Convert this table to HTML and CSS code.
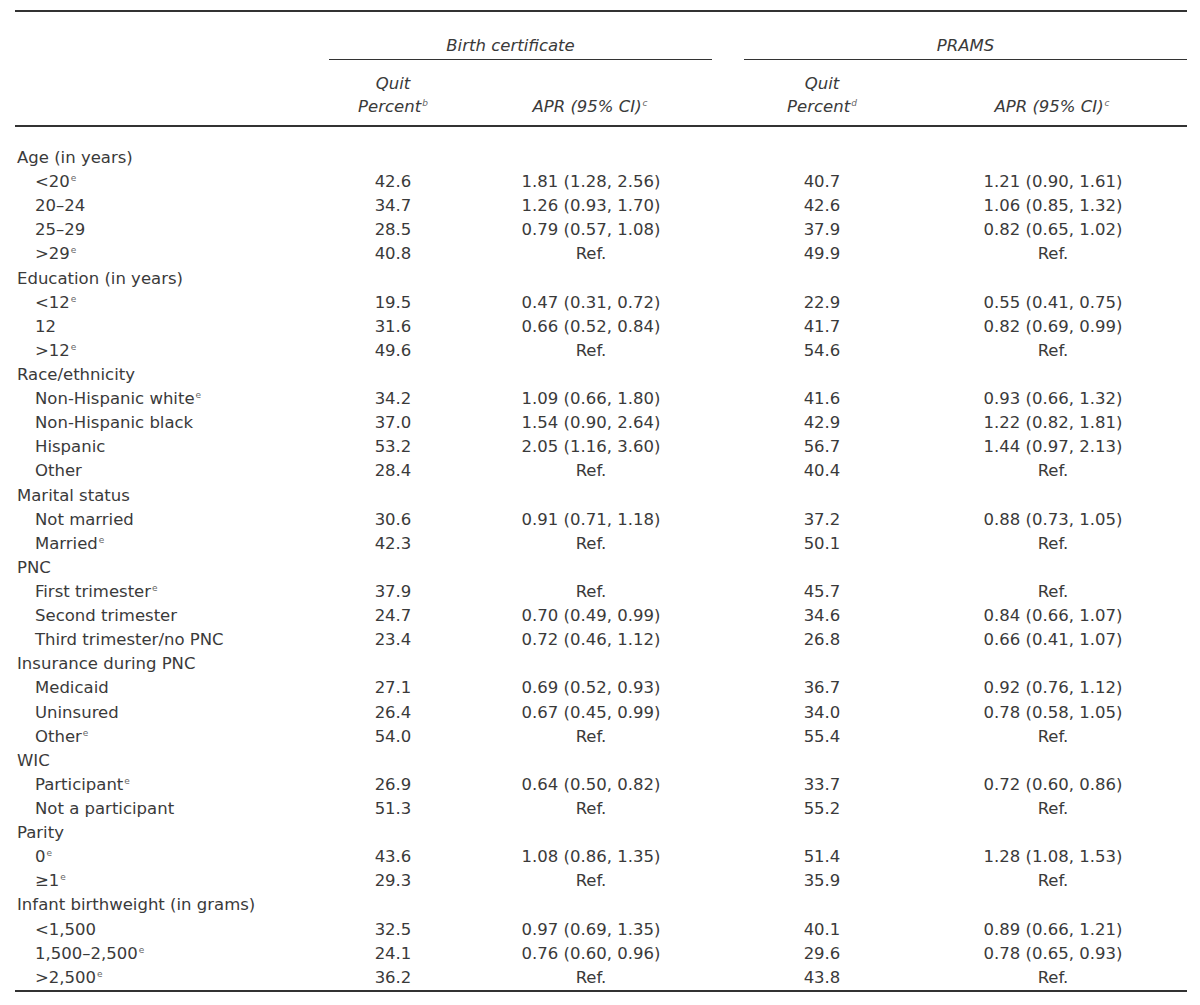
FILE: index.html
```html
<!DOCTYPE html>
<html lang="en">
<head>
<meta charset="utf-8">
<title>Quit rates table</title>
<link rel="stylesheet" href="styles.css">
</head>
<body>
<div class="table">
  <div class="rule-top"></div>
  <div class="grid head-groups">
    <div class="cell-empty"></div>
    <div class="group group-bc">Birth certificate</div>
    <div class="group group-pr">PRAMS</div>
  </div>
  <div class="grid head-cols">
    <div class="cell-empty"></div>
    <div class="hc">Quit<br>Percent<sup>b</sup></div>
    <div class="hc">APR (95% CI)<sup>c</sup></div>
    <div class="hc">Quit<br>Percent<sup>d</sup></div>
    <div class="hc">APR (95% CI)<sup>c</sup></div>
  </div>
  <div class="rule-thick"></div>
  <div class="body">
    <div class="grid row"><div class="lab cat">Age (in years)</div></div>
    <div class="grid row"><div class="lab sub">&lt;20<sup>e</sup></div><div class="num">42.6</div><div class="num">1.81 (1.28, 2.56)</div><div class="num">40.7</div><div class="num">1.21 (0.90, 1.61)</div></div>
    <div class="grid row"><div class="lab sub">20–24</div><div class="num">34.7</div><div class="num">1.26 (0.93, 1.70)</div><div class="num">42.6</div><div class="num">1.06 (0.85, 1.32)</div></div>
    <div class="grid row"><div class="lab sub">25–29</div><div class="num">28.5</div><div class="num">0.79 (0.57, 1.08)</div><div class="num">37.9</div><div class="num">0.82 (0.65, 1.02)</div></div>
    <div class="grid row"><div class="lab sub">&gt;29<sup>e</sup></div><div class="num">40.8</div><div class="num">Ref.</div><div class="num">49.9</div><div class="num">Ref.</div></div>
    <div class="grid row"><div class="lab cat">Education (in years)</div></div>
    <div class="grid row"><div class="lab sub">&lt;12<sup>e</sup></div><div class="num">19.5</div><div class="num">0.47 (0.31, 0.72)</div><div class="num">22.9</div><div class="num">0.55 (0.41, 0.75)</div></div>
    <div class="grid row"><div class="lab sub">12</div><div class="num">31.6</div><div class="num">0.66 (0.52, 0.84)</div><div class="num">41.7</div><div class="num">0.82 (0.69, 0.99)</div></div>
    <div class="grid row"><div class="lab sub">&gt;12<sup>e</sup></div><div class="num">49.6</div><div class="num">Ref.</div><div class="num">54.6</div><div class="num">Ref.</div></div>
    <div class="grid row"><div class="lab cat">Race/ethnicity</div></div>
    <div class="grid row"><div class="lab sub">Non-Hispanic white<sup>e</sup></div><div class="num">34.2</div><div class="num">1.09 (0.66, 1.80)</div><div class="num">41.6</div><div class="num">0.93 (0.66, 1.32)</div></div>
    <div class="grid row"><div class="lab sub">Non-Hispanic black</div><div class="num">37.0</div><div class="num">1.54 (0.90, 2.64)</div><div class="num">42.9</div><div class="num">1.22 (0.82, 1.81)</div></div>
    <div class="grid row"><div class="lab sub">Hispanic</div><div class="num">53.2</div><div class="num">2.05 (1.16, 3.60)</div><div class="num">56.7</div><div class="num">1.44 (0.97, 2.13)</div></div>
    <div class="grid row"><div class="lab sub">Other</div><div class="num">28.4</div><div class="num">Ref.</div><div class="num">40.4</div><div class="num">Ref.</div></div>
    <div class="grid row"><div class="lab cat">Marital status</div></div>
    <div class="grid row"><div class="lab sub">Not married</div><div class="num">30.6</div><div class="num">0.91 (0.71, 1.18)</div><div class="num">37.2</div><div class="num">0.88 (0.73, 1.05)</div></div>
    <div class="grid row"><div class="lab sub">Married<sup>e</sup></div><div class="num">42.3</div><div class="num">Ref.</div><div class="num">50.1</div><div class="num">Ref.</div></div>
    <div class="grid row"><div class="lab cat">PNC</div></div>
    <div class="grid row"><div class="lab sub">First trimester<sup>e</sup></div><div class="num">37.9</div><div class="num">Ref.</div><div class="num">45.7</div><div class="num">Ref.</div></div>
    <div class="grid row"><div class="lab sub">Second trimester</div><div class="num">24.7</div><div class="num">0.70 (0.49, 0.99)</div><div class="num">34.6</div><div class="num">0.84 (0.66, 1.07)</div></div>
    <div class="grid row"><div class="lab sub">Third trimester/no PNC</div><div class="num">23.4</div><div class="num">0.72 (0.46, 1.12)</div><div class="num">26.8</div><div class="num">0.66 (0.41, 1.07)</div></div>
    <div class="grid row"><div class="lab cat">Insurance during PNC</div></div>
    <div class="grid row"><div class="lab sub">Medicaid</div><div class="num">27.1</div><div class="num">0.69 (0.52, 0.93)</div><div class="num">36.7</div><div class="num">0.92 (0.76, 1.12)</div></div>
    <div class="grid row"><div class="lab sub">Uninsured</div><div class="num">26.4</div><div class="num">0.67 (0.45, 0.99)</div><div class="num">34.0</div><div class="num">0.78 (0.58, 1.05)</div></div>
    <div class="grid row"><div class="lab sub">Other<sup>e</sup></div><div class="num">54.0</div><div class="num">Ref.</div><div class="num">55.4</div><div class="num">Ref.</div></div>
    <div class="grid row"><div class="lab cat">WIC</div></div>
    <div class="grid row"><div class="lab sub">Participant<sup>e</sup></div><div class="num">26.9</div><div class="num">0.64 (0.50, 0.82)</div><div class="num">33.7</div><div class="num">0.72 (0.60, 0.86)</div></div>
    <div class="grid row"><div class="lab sub">Not a participant</div><div class="num">51.3</div><div class="num">Ref.</div><div class="num">55.2</div><div class="num">Ref.</div></div>
    <div class="grid row"><div class="lab cat">Parity</div></div>
    <div class="grid row"><div class="lab sub">0<sup>e</sup></div><div class="num">43.6</div><div class="num">1.08 (0.86, 1.35)</div><div class="num">51.4</div><div class="num">1.28 (1.08, 1.53)</div></div>
    <div class="grid row"><div class="lab sub">≥1<sup>e</sup></div><div class="num">29.3</div><div class="num">Ref.</div><div class="num">35.9</div><div class="num">Ref.</div></div>
    <div class="grid row"><div class="lab cat">Infant birthweight (in grams)</div></div>
    <div class="grid row"><div class="lab sub">&lt;1,500</div><div class="num">32.5</div><div class="num">0.97 (0.69, 1.35)</div><div class="num">40.1</div><div class="num">0.89 (0.66, 1.21)</div></div>
    <div class="grid row"><div class="lab sub">1,500–2,500<sup>e</sup></div><div class="num">24.1</div><div class="num">0.76 (0.60, 0.96)</div><div class="num">29.6</div><div class="num">0.78 (0.65, 0.93)</div></div>
    <div class="grid row"><div class="lab sub">&gt;2,500<sup>e</sup></div><div class="num">36.2</div><div class="num">Ref.</div><div class="num">43.8</div><div class="num">Ref.</div></div>
  </div>
  <div class="rule-bottom"></div>
</div>
</body>
</html>
```

FILE: styles.css
```css
html, body {
  margin: 0;
  padding: 0;
  background: #ffffff;
}
body {
  font-family: "DejaVu Sans", "Liberation Sans", sans-serif;
  font-size: 16.5px;
  color: #3a3a3a;
}
.table {
  width: 1172px;
  margin-left: 15px;
  padding-top: 10px;
}
.rule-top {
  border-top: 2px solid #333333;
}
.rule-thick {
  border-top: 2px solid #333333;
}
.rule-bottom {
  border-top: 2px solid #333333;
  margin-top: 0;
}
.grid {
  display: grid;
  grid-template-columns: 314px 128px 268px 194px 268px;
}
.head-groups {
  font-style: italic;
  line-height: 20px;
}
.group {
  grid-column: span 2;
  text-align: center;
  padding-top: 24px;
  padding-bottom: 3px;
  border-bottom: 1.5px solid #333333;
}
.group-bc {
  margin-right: 13px;
  padding-right: 20px;
}
.group-pr {
  margin-left: 19px;
}
.head-cols {
  font-style: italic;
  line-height: 23px;
  padding-top: 12px;
  padding-bottom: 7px;
  align-items: end;
}
.hc {
  text-align: center;
}
.head-cols .hc:nth-child(3),
.head-cols .hc:nth-child(5) {
  padding-right: 2px;
}
sup {
  font-size: 9px;
  line-height: 0;
  vertical-align: 6px;
  color: #666666;
  margin-left: 1px;
}
.body {
  padding-top: 19px;
}
.row {
  height: 24.12px;
  line-height: 24.12px;
  white-space: nowrap;
}
.lab.cat {
  padding-left: 2px;
}
.lab.sub {
  padding-left: 20px;
}
.num {
  text-align: center;
}
```
